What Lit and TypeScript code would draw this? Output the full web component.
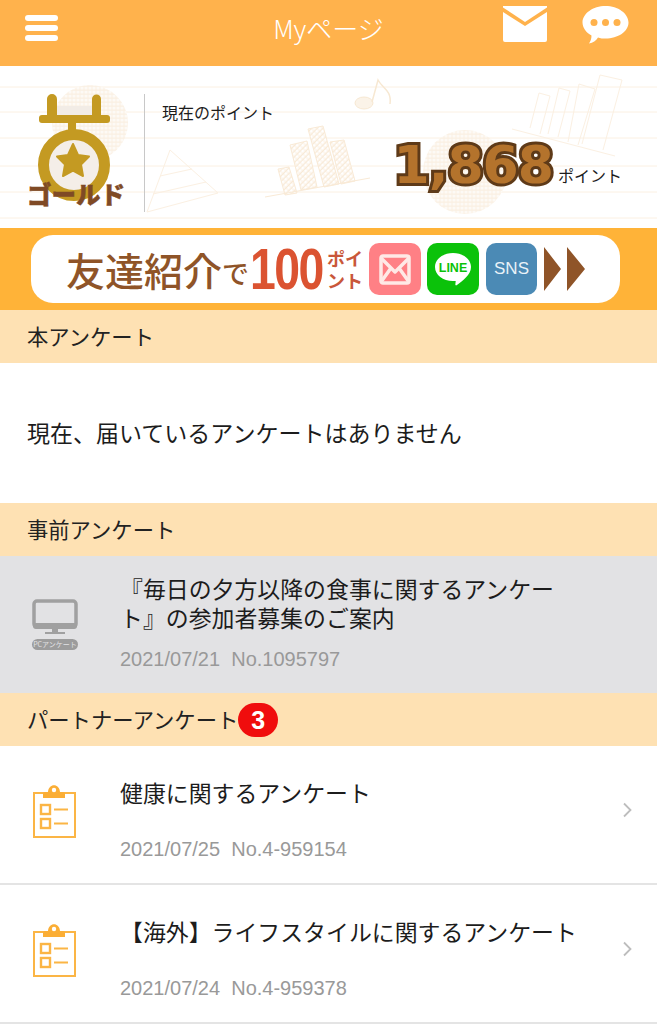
import { LitElement, html, css, svg } from "lit";
import { customElement } from "lit/decorators.js";

const clip = svg`<svg class="clip" width="44" height="56" viewBox="0 0 44 56" fill="none" stroke="#FBB545" stroke-width="2">
  <rect x="1" y="9" width="41" height="44" />
  <path d="M11 14v-4a2 2 0 0 1 2-2h3c.5-9 11.500-9 12 0h3a2 2 0 0 1 2 2v4z" transform="translate(-1 0)" fill="#FBAE35" stroke="none"/>
  <circle cx="21" cy="6" r="2.200" fill="#fff" stroke="none"/>
  <rect x="8" y="21" width="9" height="9" stroke-width="2.400"/>
  <rect x="8" y="35" width="9" height="9" stroke-width="2.400"/>
  <path d="M21 25.500h14M21 39.500h14" stroke-width="2.200"/>
</svg>`;

const chevron = svg`<svg class="chev" width="10" height="16" viewBox="0 0 10 16" fill="none" stroke="#BDBDBD" stroke-width="1.800"><path d="M2 1.500 8.500 8 2 14.500"/></svg>`;

const bg = svg`<svg class="deco" width="657" height="162" viewBox="0 0 657 162" fill="none" stroke="#FBF0E2" stroke-width="1">
  <defs>
    <pattern id="h" width="4" height="4" patternUnits="userSpaceOnUse" patternTransform="rotate(45)"><rect width="4" height="4" fill="#fff"/><path d="M0 0v4" stroke="#F7E8D2" stroke-width="1.500"/></pattern>
    <pattern id="h2" width="4" height="4" patternUnits="userSpaceOnUse"><rect width="4" height="4" fill="#FDFAF6"/><path d="M0 0h4" stroke="#FAF0E3" stroke-width="1"/></pattern>
  </defs>
  <path d="M0 21h657M0 46h657M0 72h657M0 100h657M0 126h657M0 152h657"/>
  <circle cx="90" cy="57" r="38" fill="url(#h2)" stroke="none"/>
  <path d="M170 84 218 127 147 146Z"/><path d="M160 110 192 103M153 128 206 116"/>
  <path d="M278 103l11-2 8 26-12 2zM290 79l17-4 10 46-16 3zM308 63l15-3 16 58-15 3zM330 76l14-2 11 41-14 3z" fill="url(#h)" stroke="#F9EAD6"/>
  <path d="M265 131 370 112" stroke="#F9EAD6"/>
  <ellipse cx="364" cy="37" rx="9" ry="6" fill="#FBF3E8" stroke="#F7E8D2"/>
  <path d="M372 36l6-22c4 8 14 10 12 24" stroke="#F7E8D2" stroke-width="1.500"/>
  <path d="M530 62l9-35 11 3-10 38M548 68l11-46 11 3-12 46M568 76l11-58 16 5-17 56M582 78l18-69 22 5-19 70"/>
  <path d="M512 63 615 90"/>
  <circle cx="465" cy="106" r="42" fill="url(#h2)" stroke="none"/>
</svg>`;

const medal = svg`<svg class="medal" width="100" height="122" viewBox="0 0 100 122">
  <rect x="28" y="12" width="38" height="10" fill="#F2ECE6"/>
  <circle cx="47" cy="71" r="30.500" fill="#F4EEE8" stroke="#C49A22" stroke-width="11"/>
  <path d="M20 5a5 5 0 0 1 10 0v18H20zM65 5a4.500 4.500 0 0 1 9 0v18h-9z" fill="#C49A22"/>
  <rect x="12" y="21" width="71" height="8" rx="3" fill="#C49A22"/>
  <rect x="41" y="28" width="8" height="9" fill="#C49A22"/>
  <path d="M46 50l5 11 11 1.500-8 8 2 11.500-10-5.500-10 5.500 2-11.500-8-8 11-1.500z" fill="#C49A22" stroke="#C49A22" stroke-width="2" stroke-linejoin="round"/>
</svg>`;

@customElement("app-root")
export class AppRoot extends LitElement {
  static styles = css`
    :host { display: block; width: 657px; background: #fff; font-family: "Noto Sans CJK JP", "Noto Sans", sans-serif; color: #1c1c1c; overflow: hidden; }
    svg { display: block; flex: none; }
    .header { height: 66px; background: #FFB24C; display: grid; grid-template-columns: 1fr auto 1fr; color: #fff; }
    .burger { margin: 15px 0 0 25px; width: 33px; display: flex; flex-direction: column; gap: 4px; }
    .burger i { display: block; height: 6px; border-radius: 3px; background: #fff; }
    .title { font: 300 26px/56px "Noto Sans CJK JP", sans-serif; }
    .hicons { display: flex; justify-content: flex-end; gap: 34px; padding: 5px 28px 0 0; }
    .panel { position: relative; height: 162px; display: flex; background: #fff; }
    .deco { position: absolute; left: 0; top: 0; }
    .medalbox { position: relative; width: 144px; height: 162px; flex: none; }
    .medal { position: absolute; left: 27px; top: 28px; }
    .rank { position: absolute; left: 27px; top: 111px; width: 100px; font-size: 24.500px; line-height: 34px; font-weight: 900; color: #7F4A25; white-space: nowrap; -webkit-text-stroke: .5px #7F4A25; }
    .pt { position: relative; flex: 1; margin: 28px 0 16px; border-left: 1px solid #C8C8C8; padding: 7px 35px 0 17px; display: flex; flex-direction: column; font-size: 16px; line-height: 22px; }
    .ptrow { display: flex; justify-content: flex-end; align-items: flex-end; margin-top: 11px; gap: 5px; }
    .num { font: 700 52px/62px "DejaVu Sans", sans-serif; color: #B4732C; -webkit-text-stroke: 6px #5E3A18; paint-order: stroke fill; letter-spacing: -1px; }
    .ptlabel { padding-bottom: 10px; }
    .banner { height: 82px; background: #FFB338; padding: 7px 37px 7px 31px; box-sizing: border-box; }
    .pill { height: 68px; background: #fff; border-radius: 22px; display: flex; align-items: center; padding-left: 35px; color: #8F5428; }
    .big { font-size: 39px; font-weight: 500; line-height: 68px; white-space: nowrap; }
    .de { font-size: 27px; line-height: 40px; font-weight: 500; margin-top: 8px; width: 28px; }
    .hund { font: 700 58px/68px "Liberation Sans", sans-serif; color: #DB5331; letter-spacing: -2px; width: 77px; display: inline-block; transform: scaleX(.8); transform-origin: left center; overflow: visible; white-space: nowrap; contain: inline-size; }
    .pts { font-size: 18px; line-height: 22px; font-weight: 700; color: #C9573A; width: 42px; white-space: nowrap; }
    .sq { width: 52px; height: 52px; border-radius: 10px; display: flex; align-items: center; justify-content: center; margin-right: 6px; }
    .mail { background: #FF8085; }
    .line { background: #0BC20A; margin-right: 7px; }
    .sns { background: #4B8AB5; color: #E9F2F8; font: 17px "Liberation Sans", sans-serif; margin-right: 7px; width: 51px; }
    .sec { height: 53px; background: #FEE1B3; display: flex; align-items: center; padding-left: 27px; font-size: 21.300px; line-height: 28px; padding-bottom: 2px; box-sizing: border-box; color: #222; }
    .badge { width: 40px; height: 34px; border-radius: 17px; background: #F00D0D; color: #fff; font: 700 25px/34px "Liberation Sans", sans-serif; text-align: center; margin-top: 3px; }
    .empty { height: 140px; display: flex; align-items: center; padding: 0 0 2px 27px; font-size: 23px; box-sizing: border-box; }
    .row { height: 137px; display: flex; align-items: center; padding-left: 32px; box-sizing: border-box; }
    .row.gray { background: #E2E2E4; }
    .row.plain { height: 139px; border-bottom: 2px solid #E4E4E4; }
    .lead { width: 88px; flex: none; }
    .clip { margin: -5px 0 0 1px; }
    .txt { width: 470px; align-self: stretch; box-sizing: border-box; display: flex; flex-direction: column; padding: 32px 0 22px; }
    .gray .txt { padding-top: 18px; }
    .t { font-size: 22.900px; line-height: 29px; width: 440px; }
    .plain .t { width: 470px; white-space: nowrap; }
    .d { margin-top: auto; font: 20px/24px "Liberation Sans", sans-serif; color: #999; white-space: pre; }
    .chev { margin: 0 0 10px 32px; }
    .pc { display: flex; flex-direction: column; width: 46px; }
    .pctag { margin-top: 4px; height: 11px; border-radius: 6px; background: #9C9C9C; color: #E2E2E4; font-size: 7px; line-height: 11px; text-align: center; white-space: nowrap; }
  `;

  render() {
    return html`
      <div class="header">
        <div class="burger"><i></i><i></i><i></i></div>
        <div class="title">Myページ</div>
        <div class="hicons">
          <svg width="46" height="38" viewBox="0 0 46 38"><path d="M1 1h44v1.500L23 17 1 2.500z" fill="#fff"/><path d="M1 7l22 14L45 7v28a2 2 0 0 1-2 2H3a2 2 0 0 1-2-2z" fill="#fff"/></svg>
          <svg width="47" height="39" viewBox="0 0 47 39"><path d="M23.500 1C36 1 46.500 8.500 46.500 17.500S36 33.500 23.500 33.500c-3 0-5 0-7.500-1-2 3-5 5.500-9 6 1.500-2 2.500-5 2.500-8C4 27.500.5 22.500.5 17.500.5 8.500 11 1 23.500 1z" fill="#fff"/><circle cx="12" cy="17.500" r="3.500" fill="#FFB24C"/><circle cx="23.500" cy="17.500" r="3.500" fill="#FFB24C"/><circle cx="35" cy="17.500" r="3.500" fill="#FFB24C"/></svg>
        </div>
      </div>
      <div class="panel">
        ${bg}
        <div class="medalbox">${medal}<div class="rank">ゴールド</div></div>
        <div class="pt">
          <div>現在のポイント</div>
          <div class="ptrow"><span class="num">1,868</span><span class="ptlabel">ポイント</span></div>
        </div>
      </div>
      <div class="banner"><div class="pill">
        <span class="big">友達紹介</span><span class="de">で</span><span class="hund">100</span>
        <span class="pts">ポイ<br>ント</span>
        <div class="sq mail"><svg width="32" height="31" viewBox="0 0 32 31" fill="none" stroke="#FFE9E6" stroke-width="3.500" stroke-linejoin="round"><rect x="2" y="2" width="28" height="27" rx="2"/><path d="M2 4l14 14L30 4M2 28l10-14M30 28 20 14"/></svg></div>
        <div class="sq line"><svg width="42" height="42" viewBox="0 0 42 42"><path d="M21 5c10 0 18 6 18 14 0 8-9 14-14 18-1 .8-2 .5-1.600-1l.3-3H21C11 33 3 27 3 19 3 11 11 5 21 5z" fill="#fff"/><text x="21" y="24" text-anchor="middle" font-family="Liberation Sans" font-weight="700" font-size="12.500" fill="#0BC20A">LINE</text></svg></div>
        <div class="sq sns">SNS</div>
        <svg width="42" height="46" viewBox="0 0 42 46" fill="#8F5428"><path d="M0 1l17 22L0 45zM23 1l18 22-18 22z"/></svg>
      </div></div>
      <div class="sec">本アンケート</div>
      <div class="empty">現在、届いているアンケートはありません</div>
      <div class="sec">事前アンケート</div>
      <div class="row gray">
        <div class="lead"><div class="pc">
          <svg width="46" height="36" viewBox="0 0 46 36" fill="none"><rect x="2" y="2" width="42" height="26" rx="3" stroke="#A0A0A0" stroke-width="3.500"/><path d="M1 24h44v3a3 3 0 0 1-3 3H4a3 3 0 0 1-3-3z" fill="#A0A0A0"/><path d="M20 30h6v3h-6zM13 33h20v2H13z" fill="#A0A0A0"/></svg>
          <div class="pctag">PCアンケート</div>
        </div></div>
        <div class="txt"><div class="t">『毎日の夕方以降の食事に関するアンケート』の参加者募集のご案内</div><div class="d">2021/07/21  No.1095797</div></div>
      </div>
      <div class="sec">パートナーアンケート<span class="badge">3</span></div>
      <div class="row plain"><div class="lead">${clip}</div>
        <div class="txt"><div class="t">健康に関するアンケート</div><div class="d">2021/07/25  No.4-959154</div></div>${chevron}</div>
      <div class="row plain"><div class="lead">${clip}</div>
        <div class="txt"><div class="t">【海外】ライフスタイルに関するアンケート</div><div class="d">2021/07/24  No.4-959378</div></div>${chevron}</div>
    `;
  }
}
